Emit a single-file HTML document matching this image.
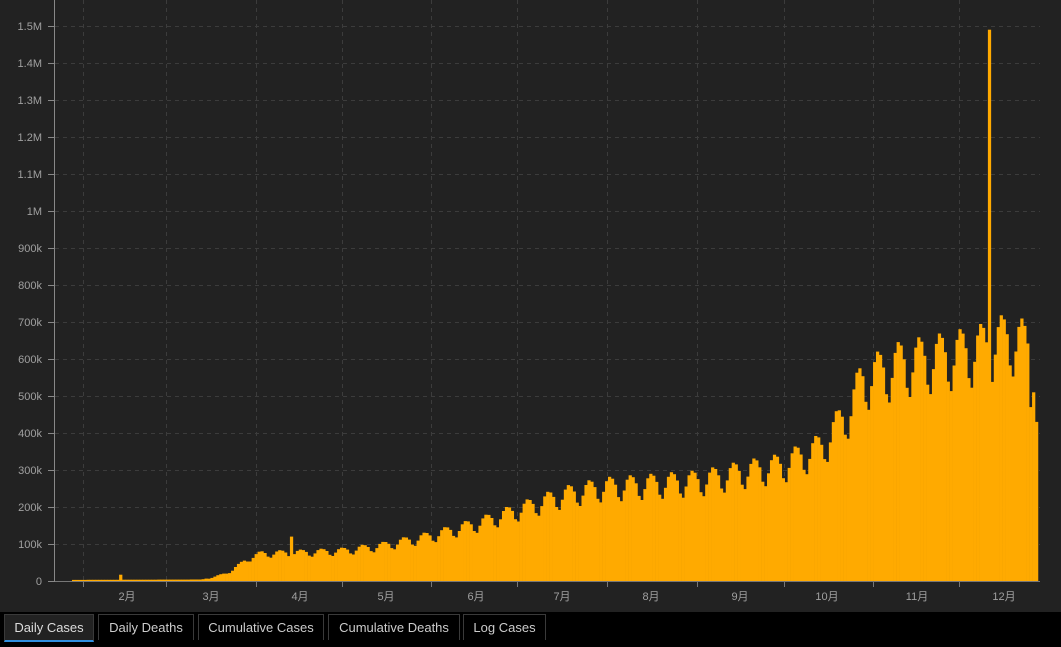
<!DOCTYPE html>
<html><head><meta charset="utf-8"><style>
html,body{margin:0;padding:0;background:#222;width:1061px;height:647px;overflow:hidden;font-family:"Liberation Sans","Noto Sans CJK SC",sans-serif}
#bar{position:absolute;left:0;top:612px;width:1061px;height:35px;background:#000}
.tab{position:absolute;top:2px;height:25px;border:1px solid #3a3a3a;border-bottom:none;color:#ccc;font-size:13px;line-height:25px;text-align:center;background:#000}
.act{background:#222;border-bottom:2px solid #2f8fe0;color:#ddd}
</style></head><body>
<svg id="c" width="1061" height="612" style="position:absolute;left:0;top:0" font-family="Liberation Sans, Noto Sans CJK SC, sans-serif" font-size="11" fill="#a0a0a0"></svg>
<div id="bar">
<div class="tab act" style="left:4px;width:88px">Daily Cases</div>
<div class="tab" style="left:98px;width:94px">Daily Deaths</div>
<div class="tab" style="left:198px;width:124px">Cumulative Cases</div>
<div class="tab" style="left:328px;width:130px">Cumulative Deaths</div>
<div class="tab" style="left:463px;width:81px">Log Cases</div>
</div>
<script>
var s='';
var labels=['0','100k','200k','300k','400k','500k','600k','700k','800k','900k','1M','1.1M','1.2M','1.3M','1.4M','1.5M'];
for(var i=0;i<16;i++){var y=581-i*37;
 if(i>0)s+='<line x1="55" x2="1040" y1="'+(y+.5)+'" y2="'+(y+.5)+'" stroke="#3c3c3c" stroke-dasharray="4,4"/>';
 s+='<line x1="48" x2="55" y1="'+(y+.5)+'" y2="'+(y+.5)+'" stroke="#888"/>';
 s+='<text x="42" y="'+(y+4)+'" text-anchor="end">'+labels[i]+'</text>';}
var vx=[83,166,256,342,431,517,607,697,784,873,959];
vx.forEach(function(x){s+='<line x1="'+(x+.5)+'" x2="'+(x+.5)+'" y1="0" y2="581" stroke="#3c3c3c" stroke-dasharray="4,4"/><line x1="'+(x+.5)+'" x2="'+(x+.5)+'" y1="581" y2="587" stroke="#777"/>';});
var ml=[[127,'2月'],[211,'3月'],[300,'4月'],[386,'5月'],[476,'6月'],[562,'7月'],[651,'8月'],[740,'9月'],[827,'10月'],[917,'11月'],[1004,'12月']];
ml.forEach(function(m){s+='<text x="'+m[0]+'" y="600" text-anchor="middle">'+m[1]+'</text>';});
var env=[[72,3],[200,4],[211,10],[230,30],[245,65],[260,82],[300,85],[340,90],[380,105],[430,135],[480,175],[520,215],[560,255],[600,280],[650,290],[700,300],[740,325],[780,345],[820,400],[850,520],[860,600],[900,650],[940,670],[975,690],[1010,730],[1030,690],[1040,600]];
function E(x){for(var k=1;k<env.length;k++){if(x<=env[k][0]){var a=env[k-1],b=env[k];return a[1]+(b[1]-a[1])*(x-a[0])/(b[0]-a[0]);}}return 600;}
var pat=[1,0.98,0.92,0.8,0.76,0.86,0.96];
var st=72,dx=2.945,N=328;
for(var d=0;d<N;d++){var x=st+d*dx;var v=E(x)*(x>205?pat[d%7]:1);
 if(Math.abs(x-120)<2)v=17; if(Math.abs(x-290)<2)v=120; if(Math.abs(x-987)<2)v=1490;
 if(d==N-1)v=430; if(d==N-2)v=510; if(d==N-3)v=470;
 var y=581-v*0.37;s+='<rect x="'+x.toFixed(2)+'" y="'+y.toFixed(1)+'" width="'+(dx+0.3).toFixed(2)+'" height="'+(581-y).toFixed(1)+'" fill="#ffaa00"/>';}
s+='<line x1="54.5" x2="54.5" y1="0" y2="581" stroke="#888"/><line x1="55" x2="1040" y1="581.5" y2="581.5" stroke="#777"/>';
document.getElementById('c').innerHTML=s;
</script>
</body></html>
